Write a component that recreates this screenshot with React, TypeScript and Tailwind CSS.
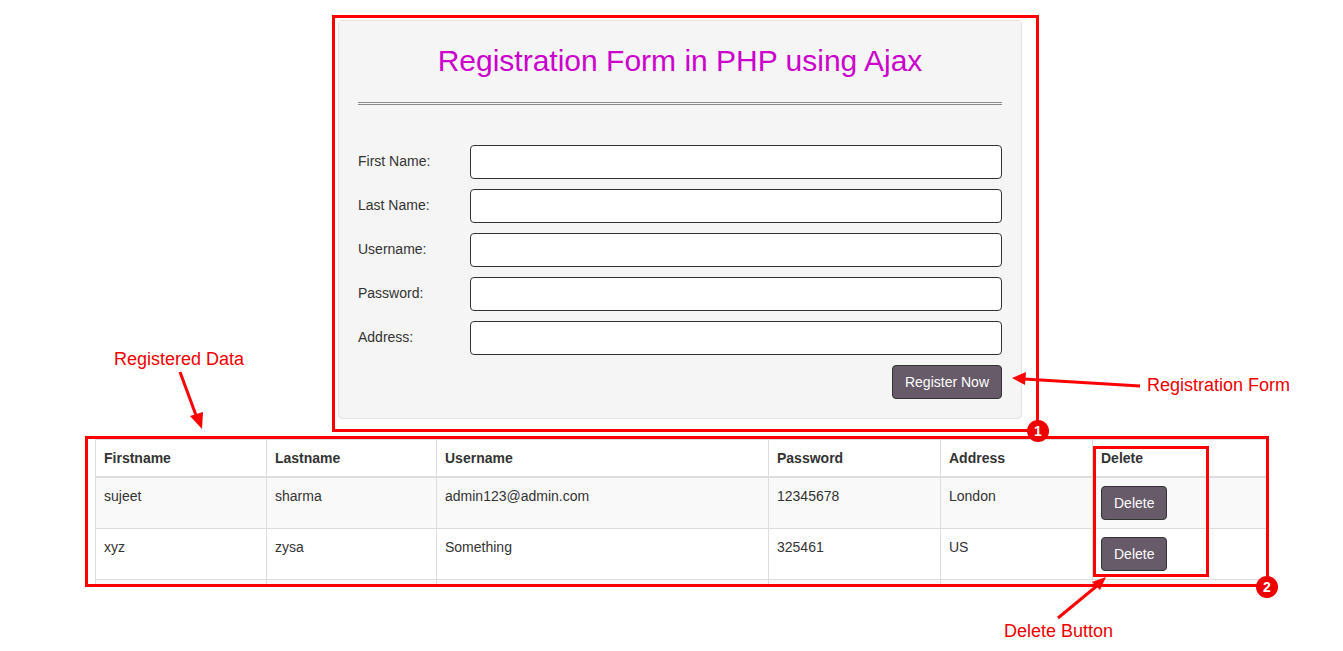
import React from "react";

const rows = [
  { first: "sujeet", last: "sharma", user: "admin123@admin.com", pass: "12345678", addr: "London" },
  { first: "xyz", last: "zysa", user: "Something", pass: "325461", addr: "US" },
  { first: "", last: "", user: "", pass: "", addr: "" },
];

const fields = ["First Name:", "Last Name:", "Username:", "Password:", "Address:"];

function FormRow({ label }: { label: string }) {
  return (
    <div className="flex items-center h-[34px]">
      <label className="w-[112px] text-[14px] text-[#333] -mt-[1px]">{label}</label>
      <input className="flex-1 h-[34px] bg-white border border-[#333] rounded-[4px] px-3 outline-none" />
    </div>
  );
}

function Annotations() {
  return (
    <>
      {/* red boxes */}
      <div className="absolute left-[332px] top-[15px] w-[707px] h-[417px] border-[3px] border-[#f00]" />
      <div className="absolute left-[85px] top-[436px] w-[1184px] h-[151px] border-[3px] border-[#f00]" />
      <div className="absolute left-[1093px] top-[446px] w-[116px] h-[131px] border-[3px] border-[#f00]" />

      <svg className="absolute left-0 top-0" width="1343" height="651" viewBox="0 0 1343 651">
        {/* Registered Data arrow */}
        <line x1="180" y1="372" x2="197" y2="418" stroke="#f00" strokeWidth="3" />
        <polygon points="190,416 202,429 203,412" fill="#f00" />
        {/* Registration Form arrow */}
        <line x1="1140" y1="386" x2="1024" y2="379" stroke="#f00" strokeWidth="3" />
        <polygon points="1012,378 1026,372 1025,385" fill="#f00" />
        {/* Delete Button arrow */}
        <line x1="1058" y1="618" x2="1098" y2="585" stroke="#f00" strokeWidth="3" />
        <polygon points="1106,577 1092,582 1100,590" fill="#f00" />
        {/* markers */}
        <circle cx="1038" cy="431" r="11" fill="#e00" />
        <text x="1038" y="436" textAnchor="middle" fill="#fff" fontSize="14" fontWeight="bold" fontFamily="Liberation Sans, Arial, sans-serif">1</text>
        <circle cx="1267" cy="587" r="11" fill="#e00" />
        <text x="1267" y="592" textAnchor="middle" fill="#fff" fontSize="14" fontWeight="bold" fontFamily="Liberation Sans, Arial, sans-serif">2</text>
      </svg>

      <div className="absolute left-[114px] top-[348px] text-[18px] leading-[22px] text-[#e00]">Registered Data</div>
      <div className="absolute left-[1147px] top-[374px] text-[18px] leading-[22px] text-[#e00]">Registration Form</div>
      <div className="absolute left-[1004px] top-[620px] text-[18px] leading-[22px] text-[#e00]">Delete Button</div>
    </>
  );
}

export default function App() {
  return (
    <div
      className="relative w-[1343px] h-[651px] bg-white overflow-hidden"
      style={{ fontFamily: '"Liberation Sans", Arial, sans-serif' }}
    >
      <div className="pt-[20px] pl-[338px]">
        <div className="w-[684px] bg-[#f5f5f5] border border-[#e3e3e3] rounded-[4px] p-[19px]">
          <h2 className="mt-[4px] text-center text-[30px] leading-[33px] text-[#cc00cc]">
            Registration Form in PHP using Ajax
          </h2>
          <hr className="mt-[25px] border-0 border-t-[3px] border-double border-[#8a8a8a]" />
          <form className="mt-[40px] flex flex-col gap-[10px]" onSubmit={(e) => e.preventDefault()}>
            {fields.map((f) => (
              <FormRow key={f} label={f} />
            ))}
            <div className="flex justify-end">
              <button className="h-[34px] px-[12px] bg-[#675a69] border border-[#333] rounded-[4px] text-white text-[14px]">
                Register Now
              </button>
            </div>
          </form>
        </div>
      </div>

      <div className="ml-[95px] mt-[20px] w-[1172px] h-[147px] overflow-hidden">
        <table className="w-full border-collapse border border-[#ddd] text-[14px] text-[#333] leading-[20px] table-fixed">
          <colgroup>
            <col className="w-[171px]" />
            <col className="w-[170px]" />
            <col className="w-[332px]" />
            <col className="w-[172px]" />
            <col className="w-[152px]" />
            <col />
          </colgroup>
          <thead>
            <tr>
              {["Firstname", "Lastname", "Username", "Password", "Address", "Delete"].map((h) => (
                <th key={h} className="text-left font-bold p-[8px] border border-[#ddd] border-b-2 align-bottom">
                  {h}
                </th>
              ))}
            </tr>
          </thead>
          <tbody>
            {rows.map((r, i) => (
              <tr key={i} className={i % 2 === 0 ? "bg-[#f9f9f9]" : "bg-white"}>
                <td className="p-[8px] border border-[#ddd] align-top">{r.first}</td>
                <td className="p-[8px] border border-[#ddd] align-top">{r.last}</td>
                <td className="p-[8px] border border-[#ddd] align-top">{r.user}</td>
                <td className="p-[8px] border border-[#ddd] align-top">{r.pass}</td>
                <td className="p-[8px] border border-[#ddd] align-top">{r.addr}</td>
                <td className="p-[8px] border border-[#ddd] align-top">
                  {i < 2 ? (
                    <button className="h-[34px] px-[12px] bg-[#675a69] border border-[#333] rounded-[4px] text-white text-[14px]">
                      Delete
                    </button>
                  ) : (
                    <div className="h-[34px]" />
                  )}
                </td>
              </tr>
            ))}
          </tbody>
        </table>
      </div>

      <Annotations />
    </div>
  );
}
